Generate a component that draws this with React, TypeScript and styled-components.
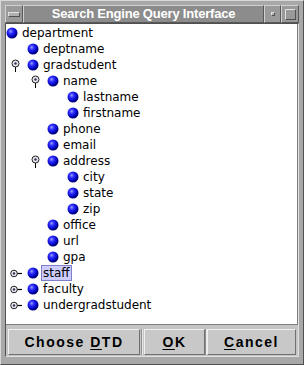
import React from 'react';
import styled, { createGlobalStyle } from 'styled-components';

type TreeNode = {
	label: string;
	open?: boolean;
	selected?: boolean;
	children?: TreeNode[];
};

const tree: TreeNode = {
	label: 'department',
	open: true,
	children: [
		{ label: 'deptname' },
		{
			label: 'gradstudent',
			open: true,
			children: [
				{
					label: 'name',
					open: true,
					children: [{ label: 'lastname' }, { label: 'firstname' }],
				},
				{ label: 'phone' },
				{ label: 'email' },
				{
					label: 'address',
					open: true,
					children: [{ label: 'city' }, { label: 'state' }, { label: 'zip' }],
				},
				{ label: 'office' },
				{ label: 'url' },
				{ label: 'gpa' },
			],
		},
		{ label: 'staff', selected: true, children: [{ label: 'x' }] },
		{ label: 'faculty', children: [{ label: 'x' }] },
		{ label: 'undergradstudent', children: [{ label: 'x' }] },
	],
};

const GlobalStyle = createGlobalStyle`
	html, body {
		margin: 0;
		padding: 0;
		background: #a8a8a8;
	}
`;

const Ball = () => (
	<svg width="12" height="12" viewBox="0 0 12 12">
		<defs>
			<radialGradient id="ball" cx="0.38" cy="0.35" r="0.65">
				<stop offset="0" stopColor="#9a9aff" />
				<stop offset="0.35" stopColor="#2a2aff" />
				<stop offset="0.8" stopColor="#0000b0" />
				<stop offset="1" stopColor="#000060" />
			</radialGradient>
		</defs>
		<circle cx="6" cy="6" r="5.5" fill="url(#ball)" />
	</svg>
);

const OpenHandle = () => (
	<svg width="9" height="14" viewBox="0 0 9 14">
		<line x1="4.5" y1="7" x2="4.5" y2="13" stroke="#000" strokeWidth="1" />
		<circle cx="4.5" cy="4.5" r="3.5" fill="#e8e8f0" stroke="#202020" strokeWidth="1" />
		<circle cx="4.5" cy="4.5" r="1.2" fill="#303050" />
	</svg>
);

const ClosedHandle = () => (
	<svg width="12" height="9" viewBox="0 0 12 9">
		<line x1="7" y1="4.5" x2="12" y2="4.5" stroke="#000" strokeWidth="1.2" />
		<circle cx="4" cy="4.5" r="3.3" fill="#e8e8f0" stroke="#202020" strokeWidth="1" />
		<circle cx="4" cy="4.5" r="1.2" fill="#303050" />
	</svg>
);

const Frame = styled.div`
	width: 304px;
	height: 365px;
	box-sizing: border-box;
	background: #a8a8a8;
	border-top: 1px solid #d8d8d8;
	border-left: 1px solid #d8d8d8;
	border-right: 1px solid #505050;
	border-bottom: 1px solid #505050;
	padding: 4px 4px 7px 4px;
	display: flex;
	flex-direction: column;
`;

const TitleBar = styled.div`
	height: 18px;
	display: flex;
	flex-shrink: 0;
`;

const TitleButton = styled.div<{ $w: number }>`
	width: ${p => p.$w}px;
	box-sizing: border-box;
	background: #9a9a9a;
	border-top: 1px solid #d0d0d0;
	border-left: 1px solid #d0d0d0;
	border-right: 1px solid #585858;
	border-bottom: 1px solid #585858;
	display: flex;
	align-items: center;
	justify-content: center;
`;

const MenuBar = styled.div`
	width: 10px;
	height: 3px;
	background: #b0b0b0;
	border-top: 1px solid #e0e0e0;
	border-left: 1px solid #e0e0e0;
	border-right: 1px solid #505050;
	border-bottom: 1px solid #505050;
`;

const MinDot = styled.div`
	width: 2px;
	height: 2px;
	background: #b0b0b0;
	border-top: 1px solid #e0e0e0;
	border-left: 1px solid #e0e0e0;
	border-right: 1px solid #505050;
	border-bottom: 1px solid #505050;
`;

const MaxSquare = styled.div`
	width: 9px;
	height: 9px;
	background: #9a9a9a;
	border-top: 1px solid #e0e0e0;
	border-left: 1px solid #e0e0e0;
	border-right: 1px solid #505050;
	border-bottom: 1px solid #505050;
`;

const Title = styled.div`
	flex: 1;
	box-sizing: border-box;
	background: #8c8c8c;
	border-top: 1px solid #d0d0d0;
	border-left: 1px solid #d0d0d0;
	border-right: 1px solid #585858;
	border-bottom: 1px solid #585858;
	color: #ffffff;
	font-family: "Liberation Sans", Arial, sans-serif;
	font-weight: bold;
	font-size: 13px;
	letter-spacing: -0.2px;
	line-height: 16px;
	text-align: center;
`;

const Client = styled.div`
	flex: 1;
	display: flex;
	flex-direction: column;
	background: #c4c4c4;
	border-top: 1px solid #505050;
	border-left: 1px solid #505050;
	border-right: 1px solid #e0e0e0;
	border-bottom: 1px solid #e0e0e0;
`;

const TreePanel = styled.div`
	flex: 1;
	background: #ffffff;
	border-bottom: 1px solid #808080;
	border-right: 1px solid #808080;
	padding-top: 1px;
	overflow: hidden;
`;

const Row = styled.div<{ $depth: number }>`
	height: 16px;
	display: flex;
	align-items: center;
	padding-left: ${p => (p.$depth === 0 ? 0 : p.$depth * 20 + 1)}px;
	font-family: "DejaVu Sans", sans-serif;
	font-size: 12px;
	color: #000;
`;

const HandleSlot = styled.div<{ $open: boolean }>`
	position: absolute;
	left: ${p => (p.$open ? -16 : -17)}px;
	top: ${p => (p.$open ? 2 : 4)}px;
	display: flex;
`;

const RowInner = styled.div`
	position: relative;
	display: flex;
	align-items: center;
	gap: 4px;
`;

const Label = styled.span<{ $selected?: boolean }>`
	line-height: 14px;
	padding: 0 1px;
	border: 1px solid ${p => (p.$selected ? '#8080c8' : 'transparent')};
	background: ${p => (p.$selected ? '#ccccff' : 'transparent')};
	margin-left: -2px;
`;

const ButtonBar = styled.div`
	height: 31px;
	box-sizing: border-box;
	flex-shrink: 0;
	display: flex;
	align-items: stretch;
	padding: 4px 2px 1px 2px;
`;

const Button = styled.button<{ $w: number }>`
	width: ${p => p.$w}px;
	box-sizing: border-box;
	margin: 0;
	padding: 0;
	background: #c8c8c8;
	border-top: 1px solid #f0f0f0;
	border-left: 1px solid #f0f0f0;
	border-right: 1px solid #707070;
	border-bottom: 1px solid #707070;
	font-family: "Liberation Sans", Arial, sans-serif;
	font-weight: bold;
	font-size: 14px;
	letter-spacing: 1.5px;
	color: #000;
	u {
		text-decoration-thickness: 1px;
		text-underline-offset: 2px;
	}
`;

const Divider = styled.div<{ $w: number }>`
	width: ${p => p.$w}px;
	display: flex;
	justify-content: center;
	&::after {
		content: '';
		width: 1px;
		background: #909090;
		border-right: 1px solid #e8e8e8;
	}
`;

const renderNode = (node: TreeNode, depth: number): React.ReactNode[] => {
	const hasKids = !!node.children && node.children.length > 0;
	const rows: React.ReactNode[] = [
		<Row key={node.label + depth} $depth={depth}>
			<RowInner>
				{depth > 0 && hasKids && (
					<HandleSlot $open={!!node.open}>
						{node.open ? <OpenHandle /> : <ClosedHandle />}
					</HandleSlot>
				)}
				<Ball />
				<Label $selected={node.selected}>{node.label}</Label>
			</RowInner>
		</Row>,
	];
	if (node.open && node.children) {
		node.children.forEach(c => rows.push(...renderNode(c, depth + 1)));
	}
	return rows;
};

export default function App() {
	return (
		<>
			<GlobalStyle />
			<Frame>
				<TitleBar>
					<TitleButton $w={18}>
						<MenuBar />
					</TitleButton>
					<Title>Search Engine Query Interface</Title>
					<TitleButton $w={17}>
						<MinDot />
					</TitleButton>
					<TitleButton $w={18}>
						<MaxSquare />
					</TitleButton>
				</TitleBar>
				<Client>
					<TreePanel>{renderNode(tree, 0)}</TreePanel>
					<ButtonBar>
						<Button $w={132}>
							Choose <u>D</u>TD
						</Button>
						<Divider $w={4} />
						<Button $w={61}>
							<u>O</u>K
						</Button>
						<Divider $w={2} />
						<Button $w={89}>
							<u>C</u>ancel
						</Button>
					</ButtonBar>
				</Client>
			</Frame>
		</>
	);
}
